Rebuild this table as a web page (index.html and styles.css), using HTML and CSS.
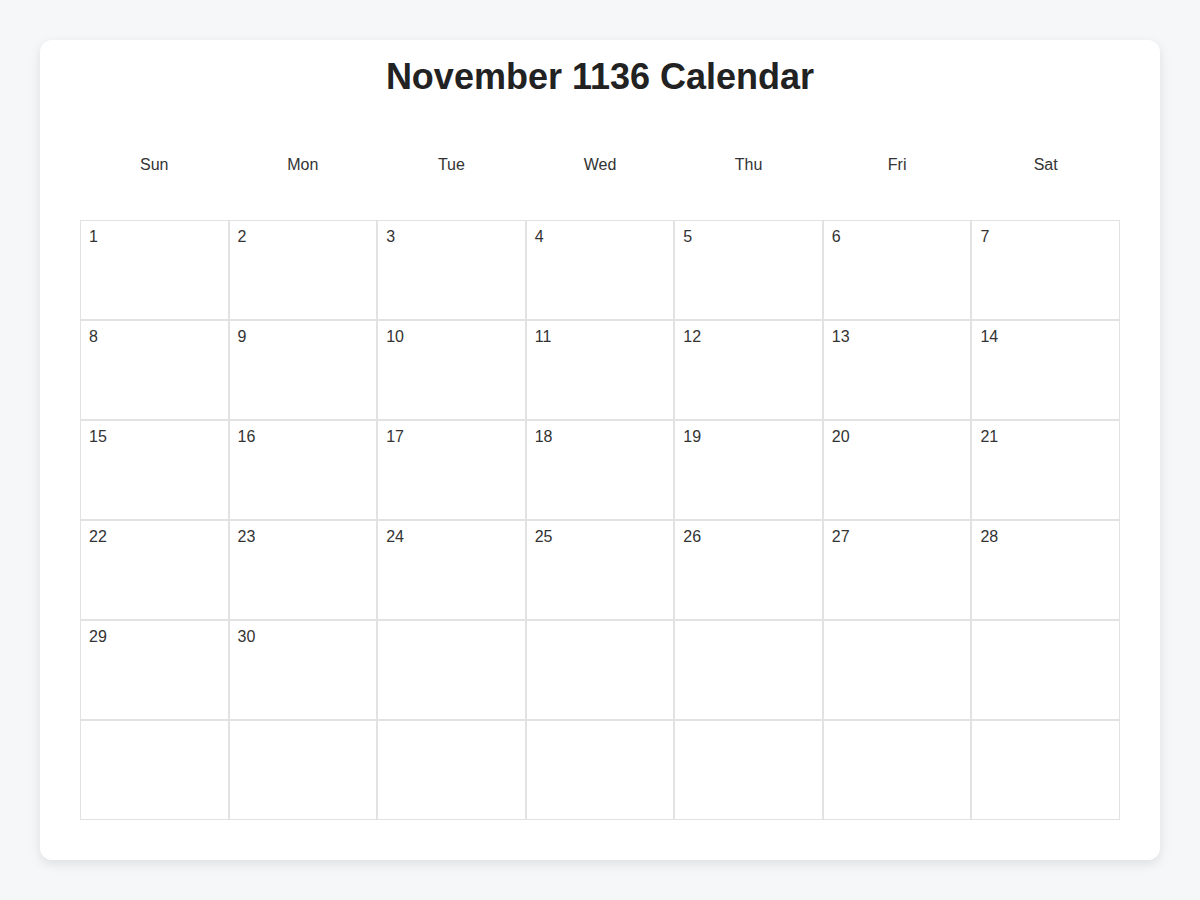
FILE: index.html
```html
<!DOCTYPE html>
<html lang="en">
<head>
<meta charset="utf-8">
<title>November 1136 Calendar</title>
<link rel="stylesheet" href="styles.css">
</head>
<body>
<div class="card">
  <h1 class="title">November 1136 Calendar</h1>
  <div class="weekdays">
    <div class="weekday">Sun</div>
    <div class="weekday">Mon</div>
    <div class="weekday">Tue</div>
    <div class="weekday">Wed</div>
    <div class="weekday">Thu</div>
    <div class="weekday">Fri</div>
    <div class="weekday">Sat</div>
  </div>
  <div class="days">
    <div class="day">1</div><div class="day">2</div><div class="day">3</div><div class="day">4</div><div class="day">5</div><div class="day">6</div><div class="day">7</div>
    <div class="day">8</div><div class="day">9</div><div class="day">10</div><div class="day">11</div><div class="day">12</div><div class="day">13</div><div class="day">14</div>
    <div class="day">15</div><div class="day">16</div><div class="day">17</div><div class="day">18</div><div class="day">19</div><div class="day">20</div><div class="day">21</div>
    <div class="day">22</div><div class="day">23</div><div class="day">24</div><div class="day">25</div><div class="day">26</div><div class="day">27</div><div class="day">28</div>
    <div class="day">29</div><div class="day">30</div><div class="day"></div><div class="day"></div><div class="day"></div><div class="day"></div><div class="day"></div>
    <div class="day"></div><div class="day"></div><div class="day"></div><div class="day"></div><div class="day"></div><div class="day"></div><div class="day"></div>
  </div>
</div>
</body>
</html>
```

FILE: styles.css
```css
* {
  box-sizing: border-box;
}

html, body {
  margin: 0;
  padding: 0;
}

body {
  background: #f6f7f9;
  font-family: "Liberation Sans", Arial, sans-serif;
  color: #333;
  padding: 40px;
}

.card {
  background: #fff;
  border-radius: 12px;
  box-shadow: 0 4px 12px rgba(0, 0, 0, 0.1);
  padding: 16px 40px 40px;
  height: 820px;
}

.title {
  margin: 0 0 59px;
  font-size: 36px;
  font-weight: bold;
  color: #222;
  text-align: center;
  line-height: 41px;
}

.weekdays {
  display: grid;
  grid-template-columns: repeat(7, 1fr);
  margin-bottom: 46px;
}

.weekday {
  text-align: center;
  font-size: 16px;
  line-height: 18px;
  color: #333;
}

.days {
  display: grid;
  grid-template-columns: repeat(7, 1fr);
  grid-auto-rows: 100px;
}

.day {
  border: 1px solid #e2e2e2;
  padding: 7px 8px 8px;
  font-size: 16px;
  line-height: 18px;
  color: #333;
}
```
